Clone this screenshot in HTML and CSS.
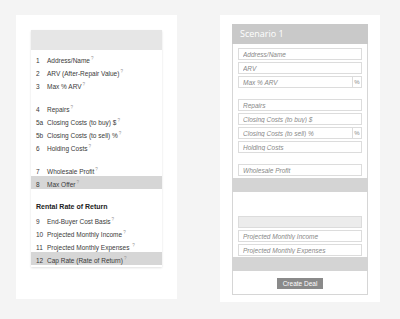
FILE: index.html
```html
<!DOCTYPE html>
<html lang="en">
<head>
    <meta charset="UTF-8">
    <title>Deal Calculator</title>
    <link rel="stylesheet" href="styles.css">
</head>
<body>
    <div class="page">
        <!-- Legend panel -->
        <div class="panel legend-panel">
            <div class="legend">
                <div class="legend-head"></div>
                <div class="row"><span class="num">1</span>Address/Name<sup>?</sup></div>
                <div class="row"><span class="num">2</span>ARV (After-Repair Value)<sup>?</sup></div>
                <div class="row"><span class="num">3</span>Max % ARV<sup>?</sup></div>
                <div class="spacer"></div>
                <div class="row"><span class="num">4</span>Repairs<sup>?</sup></div>
                <div class="row"><span class="num">5a</span>Closing Costs (to buy) $<sup>?</sup></div>
                <div class="row"><span class="num">5b</span>Closing Costs (to sell) %<sup>?</sup></div>
                <div class="row"><span class="num">6</span>Holding Costs<sup>?</sup></div>
                <div class="spacer"></div>
                <div class="row"><span class="num">7</span>Wholesale Profit<sup>?</sup></div>
                <div class="row result"><span class="num">8</span>Max Offer<sup>?</sup></div>
                <div class="section-title">Rental Rate of Return</div>
                <div class="row"><span class="num">9</span>End-Buyer Cost Basis<sup>?</sup></div>
                <div class="row"><span class="num">10</span>Projected Monthly Income<sup>?</sup></div>
                <div class="row"><span class="num">11</span>Projected Monthly Expenses <sup>?</sup></div>
                <div class="row result"><span class="num">12</span>Cap Rate (Rate of Return)<sup>?</sup></div>
            </div>
        </div>

        <!-- Scenario panel -->
        <div class="panel scenario-panel">
            <div class="scenario">
                <div class="scenario-title">Scenario 1</div>
                <div class="fields">
                    <input class="field" type="text" placeholder="Address/Name">
                    <input class="field" type="text" placeholder="ARV">
                    <div class="field-group">
                        <input class="field" type="text" placeholder="Max % ARV">
                        <span class="addon">%</span>
                    </div>
                </div>
                <div class="fields">
                    <input class="field" type="text" placeholder="Repairs">
                    <input class="field" type="text" placeholder="Closing Costs (to buy) $">
                    <div class="field-group">
                        <input class="field" type="text" placeholder="Closing Costs (to sell) %">
                        <span class="addon">%</span>
                    </div>
                    <input class="field" type="text" placeholder="Holding Costs">
                </div>
                <div class="fields">
                    <input class="field" type="text" placeholder="Wholesale Profit">
                </div>
                <div class="result-bar"></div>
                <div class="fields rental">
                    <input class="field" type="text" disabled>
                    <input class="field" type="text" placeholder="Projected Monthly Income">
                    <input class="field" type="text" placeholder="Projected Monthly Expenses">
                </div>
                <div class="result-bar low"></div>
                <div class="actions">
                    <button class="create-btn">Create Deal</button>
                </div>
            </div>
        </div>
    </div>
</body>
</html>
```

FILE: styles.css
```css
body, html {
    margin: 0;
    padding: 0;
    background: #f4f4f4;
    font-family: 'Liberation Sans', Arial, sans-serif;
}
.page {
    display: flex;
    align-items: flex-start;
    padding: 15px 0 0 16px;
    gap: 43px;
}
.panel {
    background: #fff;
    box-sizing: border-box;
}
.legend-panel {
    width: 161px;
    height: 284px;
    padding: 15px 15px 0 15px;
}
.scenario-panel {
    width: 160px;
    height: 287px;
    padding: 9px 12px 0 12px;
}

/* legend table */
.legend {
    background: #fff;
    box-shadow: 0 1px 2px rgba(0,0,0,0.12);
    padding-bottom: 2px;
}
.legend-head {
    height: 20px;
    background: #e6e6e6;
    margin-bottom: 2px;
}
.row {
    height: 13px;
    line-height: 13px;
    font-size: 6.5px;
    color: #3a3a3a;
    padding-left: 5px;
    white-space: nowrap;
}
.row.result {
    background: #d6d6d6;
}
.num {
    display: inline-block;
    width: 11px;
}
.row sup {
    font-size: 4.5px;
    color: #999;
    margin-left: 1px;
    vertical-align: 3px;
}
.spacer {
    height: 10px;
}
.section-title {
    height: 13px;
    line-height: 13px;
    margin-top: 11px;
    padding-left: 5px;
    font-size: 7px;
    font-weight: bold;
    color: #222;
}

/* scenario card */
.scenario {
    border: 1px solid #d6d6d6;
    border-top: none;
    padding-bottom: 4px;
}
.scenario-title {
    height: 20px;
    line-height: 20px;
    background: #c9c9c9;
    color: #fff;
    font-family: 'Open Sans', sans-serif;
    font-size: 9px;
    padding-left: 8px;
    margin: 0 -1px;
}
.fields {
    display: flex;
    flex-direction: column;
    gap: 2px;
    padding: 4px 5px 0 5px;
}
.fields + .fields {
    padding-top: 11px;
}
.fields.rental {
    padding-top: 24px;
}
.field {
    display: block;
    box-sizing: border-box;
    width: 100%;
    height: 12px;
    margin: 0;
    padding: 0 4px;
    border: 1px solid #dcdcdc;
    font-family: 'Liberation Sans', Arial, sans-serif;
    font-size: 6.5px;
    background: #fff;
}
.field::placeholder {
    color: #888;
    font-style: italic;
}
.field:disabled {
    background: #ececec;
}
.field-group {
    display: flex;
}
.field-group .field {
    flex: 1;
    border-right: none;
}
.addon {
    width: 10px;
    height: 12px;
    box-sizing: border-box;
    border: 1px solid #dcdcdc;
    font-size: 6px;
    line-height: 10px;
    color: #888;
    text-align: center;
}
.result-bar {
    height: 14px;
    background: #d4d4d4;
    margin: 2px -1px 0 -1px;
}
.result-bar.low {
    margin-top: 1px;
}
.actions {
    text-align: center;
    padding-top: 1px;
}
.create-btn {
    width: 46px;
    height: 11px;
    padding: 0;
    border: none;
    background: #8a8a8a;
    color: #fff;
    font-family: 'Liberation Sans', Arial, sans-serif;
    font-size: 6.5px;
    line-height: 11px;
}
```
